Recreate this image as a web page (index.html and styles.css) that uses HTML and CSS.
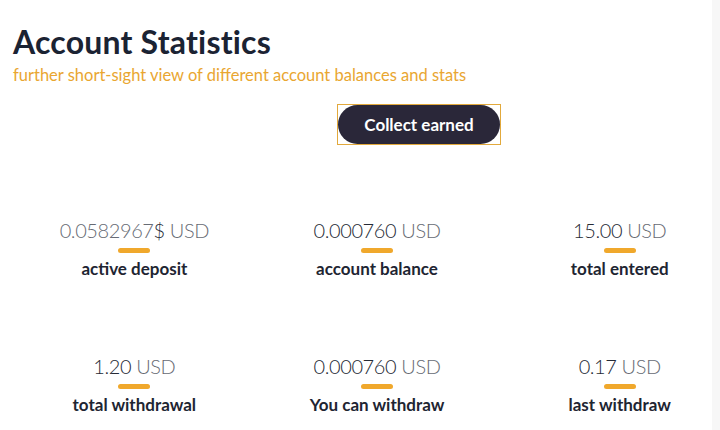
FILE: index.html
```html
<!DOCTYPE html>
<html lang="en">
<head>
<meta charset="utf-8">
<title>Account Statistics</title>
<link rel="stylesheet" href="styles.css">
</head>
<body>
<main class="page">
  <header class="head">
    <h1 class="title">Account Statistics</h1>
    <p class="subtitle">further short-sight view of different account balances and stats</p>
  </header>
  <div class="actions">
    <div class="focus-ring"><button class="btn" type="button">Collect earned</button></div>
  </div>
  <section class="stats">
    <div class="stat">
      <div class="value"><span class="unit">0.0582967</span><span class="num">$</span><span class="unit"> USD</span></div>
      <div class="bar"></div>
      <div class="label">active deposit</div>
    </div>
    <div class="stat">
      <div class="value"><span class="num">0.000760</span><span class="unit"> USD</span></div>
      <div class="bar"></div>
      <div class="label">account balance</div>
    </div>
    <div class="stat">
      <div class="value"><span class="num">15.00</span><span class="unit"> USD</span></div>
      <div class="bar"></div>
      <div class="label">total entered</div>
    </div>
    <div class="stat">
      <div class="value"><span class="num">1.20</span><span class="unit"> USD</span></div>
      <div class="bar"></div>
      <div class="label">total withdrawal</div>
    </div>
    <div class="stat">
      <div class="value"><span class="num">0.000760</span><span class="unit"> USD</span></div>
      <div class="bar"></div>
      <div class="label">You can withdraw</div>
    </div>
    <div class="stat">
      <div class="value"><span class="num">0.17</span><span class="unit"> USD</span></div>
      <div class="bar"></div>
      <div class="label">last withdraw</div>
    </div>
  </section>
</main>
<div class="track"></div>
</body>
</html>
```

FILE: styles.css
```css
html, body {
  margin: 0;
  padding: 0;
  background: #ffffff;
  overflow: hidden;
}
body {
  font-family: Lato, "Open Sans", sans-serif;
  width: 720px;
  height: 430px;
}
.page {
  padding-left: 13px;
  width: 728px;
}
.head {
  padding-top: 23px;
}
.title {
  margin: 0;
  font-size: 32px;
  line-height: 1.2;
  font-weight: 700;
  letter-spacing: 0.2px;
  color: #1b2333;
}
.subtitle {
  margin: 5px 0 0;
  font-size: 16.5px;
  line-height: 1.2;
  color: #e9a631;
}
.actions {
  display: flex;
  padding-left: 324px;
  margin-top: 18px;
}
.focus-ring {
  border: 1px solid #e2a93c;
  display: flex;
}
.btn {
  width: 162px;
  height: 39px;
  border: 0;
  border-radius: 20px;
  background: #2a2739;
  color: #ffffff;
  font-family: Lato, "Open Sans", sans-serif;
  font-weight: 700;
  font-size: 17px;
  padding: 0;
}
.stats {
  display: grid;
  grid-template-columns: repeat(3, 242.7px);
  row-gap: 74px;
  margin-top: 73px;
}
.stat {
  display: flex;
  flex-direction: column;
  align-items: center;
}
.value {
  font-size: 20px;
  line-height: 24px;
  font-weight: 300;
  letter-spacing: -0.4px;
  white-space: nowrap;
}
.num {
  color: #262b36;
}
.unit {
  color: #676b74;
}
.bar {
  width: 32px;
  height: 5px;
  border-radius: 3px;
  background: #f0a82c;
  margin-top: 6px;
}
.label {
  margin-top: 6px;
  font-size: 17px;
  line-height: 1.2;
  font-weight: 700;
  color: #1e2532;
  white-space: nowrap;
}
.track {
  position: fixed;
  top: 0;
  right: 0;
  bottom: 0;
  width: 8px;
  background: #f7f7f7;
}
```
